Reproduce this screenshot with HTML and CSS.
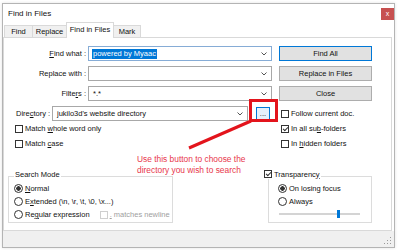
FILE: index.html
```html
<!DOCTYPE html>
<html lang="en">
<head>
  <meta charset="UTF-8" />
  <title>Find in Files</title>
  <link rel="stylesheet" href="styles.css">
</head>
<body>

  <div class="dialog">
    <div class="titlebar">
      <span class="title">Find in Files</span>
      <span class="close">x</span>
    </div>

    <div class="tabs">
      <span class="tab t-find">Find</span>
      <span class="tab t-replace">Replace</span>
      <span class="tab t-files active">Find in Files</span>
      <span class="tab t-mark">Mark</span>
    </div>

    <div class="panel">
      <div class="row">
        <label class="lbl"><u>F</u>ind what :</label>
        <div class="combo focused">
          <span class="sel">powered by Myaac</span>
          <svg class="chev" width="6" height="4"><path d="M0.5 0.5L3 3L5.5 0.5" stroke="#555" fill="none"/></svg>
        </div>
        <button class="btn default">Find All</button>
      </div>
      <div class="row">
        <label class="lbl">Replace with :</label>
        <div class="combo">
          <svg class="chev" width="6" height="4"><path d="M0.5 0.5L3 3L5.5 0.5" stroke="#555" fill="none"/></svg>
        </div>
        <button class="btn">Replace in Files</button>
      </div>
      <div class="row">
        <label class="lbl">Filte<u>r</u>s :</label>
        <div class="combo">
          <span class="val">*.*</span>
          <svg class="chev" width="6" height="4"><path d="M0.5 0.5L3 3L5.5 0.5" stroke="#555" fill="none"/></svg>
        </div>
        <button class="btn">Close</button>
      </div>

      <div class="dir-row">
        <label class="dir-lbl">Dire<u>c</u>tory :</label>
        <div class="combo dir">
          <span class="val">jukilo3d's website directory</span>
          <svg class="chev" width="6" height="4"><path d="M0.5 0.5L3 3L5.5 0.5" stroke="#555" fill="none"/></svg>
        </div>
        <button class="dots">...</button>
        <span class="check follow"><i class="box"></i><span>Follow current doc.</span></span>
      </div>

      <div class="opts">
        <div class="opts-left">
          <span class="check"><i class="box"></i><span>Match <u>w</u>hole word only</span></span>
          <span class="check"><i class="box"></i><span>Match <u>c</u>ase</span></span>
        </div>
        <div class="opts-right">
          <span class="check"><i class="box on"></i><span>In all su<u>b</u>-folders</span></span>
          <span class="check"><i class="box"></i><span>In <u>h</u>idden folders</span></span>
        </div>
      </div>

      <div class="groups">
        <div class="group mode">
          <div class="group-title">Search Mode</div>
          <span class="radio-row"><i class="radio on"></i><span><u>N</u>ormal</span></span>
          <span class="radio-row"><i class="radio"></i><span>E<u>x</u>tended (\n, \r, \t, \0, \x...)</span></span>
          <span class="radio-row"><i class="radio"></i><span>Re<u>g</u>ular expression</span>
            <i class="box off"></i><span class="muted"><u>.</u> matches newline</span></span>
        </div>
        <div class="group transp">
          <div class="group-title"><i class="box on"></i><span>Transparenc<u>y</u></span></div>
          <span class="radio-row"><i class="radio on"></i><span>On losing focus</span></span>
          <span class="radio-row"><i class="radio"></i><span>Always</span></span>
          <div class="slider"><span class="thumb"></span></div>
        </div>
      </div>
    </div>

    <div class="footer">
      <svg class="grip" width="8" height="8">
        <rect x="6" y="0" width="1" height="1" fill="#999"/>
        <rect x="3" y="3" width="1" height="1" fill="#999"/>
        <rect x="6" y="3" width="1" height="1" fill="#999"/>
        <rect x="0" y="6" width="1" height="1" fill="#999"/>
        <rect x="3" y="6" width="1" height="1" fill="#999"/>
        <rect x="6" y="6" width="1" height="1" fill="#999"/>
      </svg>
    </div>
  </div>

  <!-- annotation drawn over the screenshot -->
  <svg class="annot" width="400" height="250">
    <rect x="250.5" y="100.5" width="26" height="20" stroke="#e3141c" stroke-width="3" fill="none"/>
    <line x1="189" y1="148" x2="251" y2="121" stroke="#e3141c" stroke-width="3"/>
  </svg>
  <p class="note">Use this button to choose the<br>directory you wish to search</p>

</body>
</html>
```

FILE: styles.css
```css
* {
  margin: 0;
  padding: 0;
  box-sizing: border-box;
}

body {
  position: relative;
  width: 400px;
  height: 250px;
  overflow: hidden;
  background: #fff;
  font-family: 'Liberation Sans', Arial, sans-serif;
  font-size: 7.5px;
  color: #111;
}

u {
  text-decoration-thickness: 1px;
}

.dialog {
  margin: 3px 0 0 2px;
  width: 393px;
  height: 245px;
  border: 1px solid #b4b4b4;
  background: #fff;
  display: flex;
  flex-direction: column;
  box-shadow: 0 0 3px rgba(0, 0, 0, 0.12);
}

.titlebar {
  height: 18px;
  display: flex;
  align-items: flex-start;
}

.title {
  font-size: 8px;
  line-height: 11px;
  margin: 4px 0 0 5px;
}

.close {
  margin: 4px 0 0 auto;
  width: 13px;
  height: 12px;
  background: #c75050;
  color: #fff;
  font-size: 7px;
  line-height: 12px;
  text-align: center;
}

.tabs {
  height: 15px;
  display: flex;
  align-items: flex-end;
  padding-left: 1px;
}

.tab {
  height: 12px;
  line-height: 11px;
  text-align: center;
  background: #f0f0f0;
  border: 1px solid #d9d9d9;
  border-bottom: none;
  margin-right: -1px;
}

.t-find { width: 29px; }
.t-replace { width: 35px; }
.t-files { width: 48px; }
.t-mark { width: 28px; }

.tab.active {
  height: 16px;
  line-height: 13px;
  background: #fff;
  position: relative;
  z-index: 1;
  margin-bottom: -1px;
}

.panel {
  height: 194px;
  margin-right: 2px;
  border: 1px solid #d9d9d9;
  padding-top: 8px;
  background: #fff;
}

.row {
  display: flex;
  align-items: center;
  height: 15px;
  margin-bottom: 5px;
}

.lbl {
  width: 82px;
  text-align: right;
}

.combo {
  margin-left: 2px;
  width: 184px;
  height: 15px;
  border: 1px solid #a8a8a8;
  display: flex;
  align-items: center;
  padding-left: 3px;
}

.combo.focused {
  border-color: #86acd6;
}

.chev {
  margin: 0 4px 0 auto;
}

.sel {
  background: #0078d7;
  color: #fff;
  line-height: 10px;
  padding: 0 1px;
}

.val {
  padding-left: 1px;
}

.btn {
  margin-left: 7px;
  width: 93px;
  height: 15px;
  background: #e1e1e1;
  border: 1px solid #adadad;
  font: inherit;
  color: #111;
}

.btn.default {
  border-color: #0078d7;
}

.dir-row {
  display: flex;
  align-items: center;
  height: 15px;
  padding-left: 12px;
}

.dir-lbl {
  width: 36px;
}

.combo.dir {
  margin-left: 0;
  width: 196px;
}

.dots {
  margin-left: 8px;
  width: 14px;
  height: 14px;
  background: #e5f1fb;
  border: 1px solid #0078d7;
  font: inherit;
  line-height: 8px;
  color: #111;
}

.check {
  display: flex;
  align-items: center;
  height: 15px;
}

.follow {
  margin-left: 11px;
}

.box {
  position: relative;
  display: inline-block;
  width: 8px;
  height: 8px;
  border: 1px solid #333;
  background: #fff;
  margin-right: 2px;
  flex: none;
}

.box.on::after {
  content: '';
  position: absolute;
  left: 2px;
  top: 0;
  width: 2px;
  height: 4px;
  border: solid #333;
  border-width: 0 1px 1px 0;
  transform: rotate(45deg);
}

.box.off {
  border-color: #cfcfcf;
  margin-left: 10px;
}

.opts {
  display: grid;
  grid-template-columns: 277px 1fr;
}

.opts-left {
  padding-left: 11px;
}

.groups {
  display: flex;
  margin-top: 25px;
  padding-left: 4px;
}

.group {
  height: 47px;
  border: 1px solid #dcdcdc;
  display: flex;
  flex-direction: column;
}

.group.mode {
  width: 165px;
  padding-left: 5px;
}

.group.transp {
  width: 104px;
  margin-left: 95px;
  padding-left: 9px;
}

.group-title {
  display: flex;
  align-items: center;
  width: fit-content;
  height: 10px;
  margin-top: -8px;
  margin-bottom: 3px;
  padding: 0 1px;
  background: #fff;
}

.transp .group-title {
  margin-left: -15px;
}

.radio-row {
  display: flex;
  align-items: center;
  height: 13px;
}

.radio {
  width: 9px;
  height: 9px;
  border: 1px solid #333;
  border-radius: 50%;
  margin-right: 2px;
  background: #fff;
  flex: none;
}

.radio.on {
  background: radial-gradient(circle, #333 2px, #fff 2.5px);
}

.muted {
  color: #a0a0a0;
}

.slider {
  position: relative;
  margin: 5px 0 0 1px;
  width: 81px;
  height: 2px;
  background: #e2e2e2;
  border: 1px solid #d4d4d4;
}

.thumb {
  position: absolute;
  left: 57px;
  top: -4px;
  width: 3px;
  height: 8px;
  background: #0078d7;
}

.footer {
  flex: 1;
  background: #f0f0f0;
  display: flex;
  justify-content: flex-end;
  align-items: flex-end;
  padding: 0 2px 2px 0;
}

.annot {
  position: absolute;
  left: 0;
  top: 0;
  pointer-events: none;
}

.note {
  position: absolute;
  left: 137px;
  top: 154px;
  font-size: 8.4px;
  line-height: 11px;
  color: #e8374c;
}
```
